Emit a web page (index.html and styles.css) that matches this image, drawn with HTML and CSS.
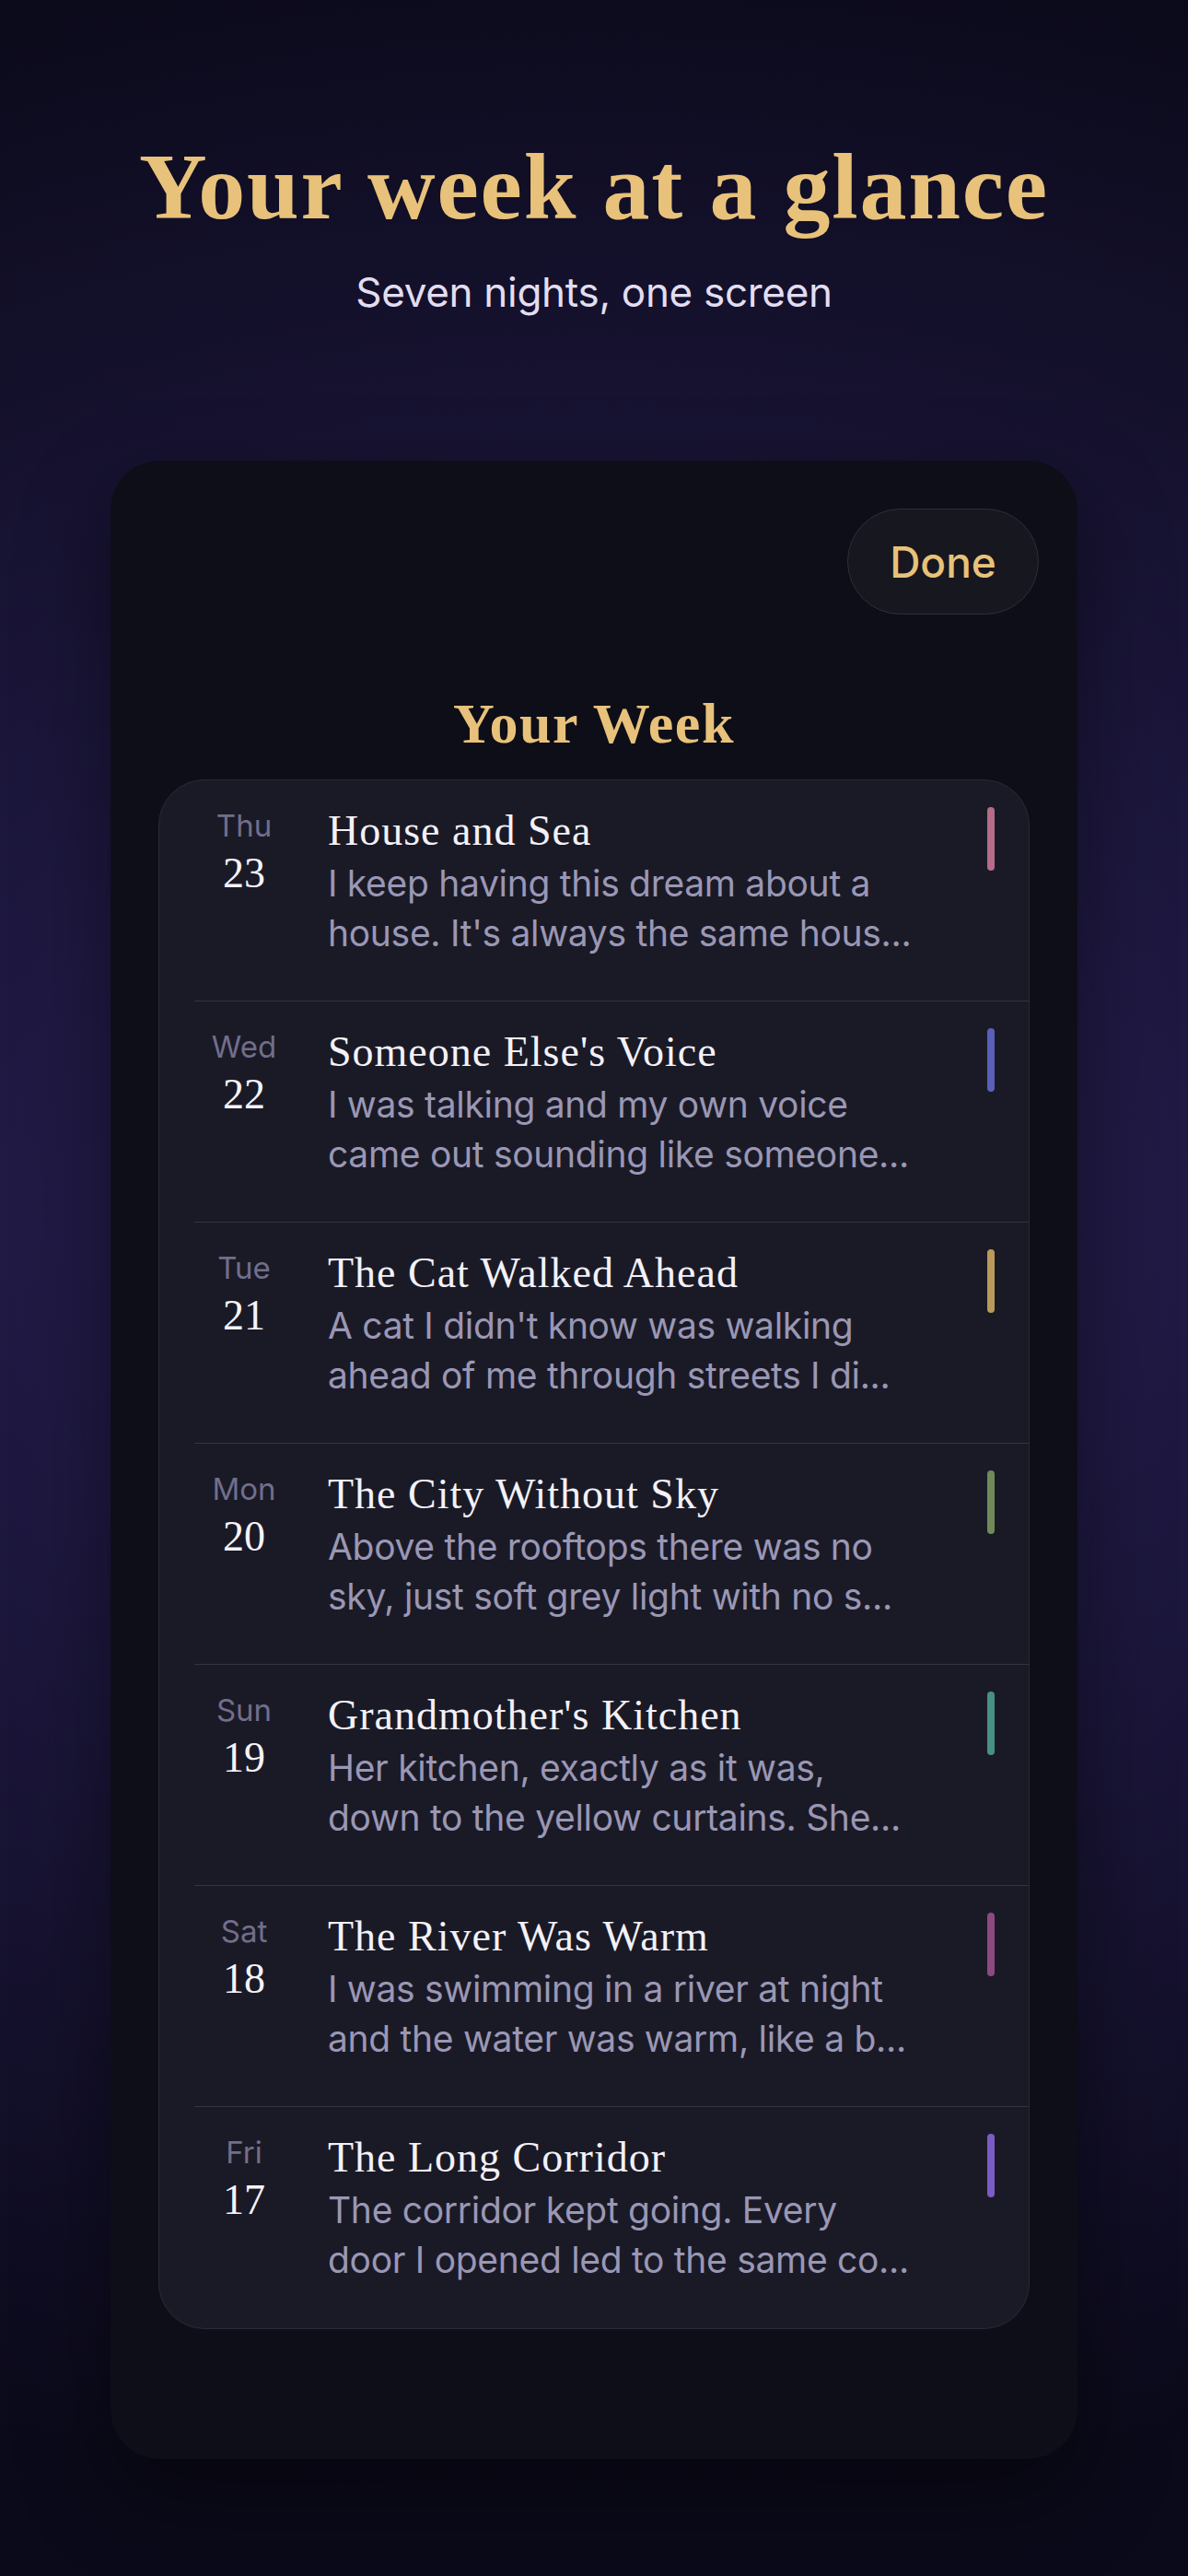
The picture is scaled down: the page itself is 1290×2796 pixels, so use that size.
FILE: index.html
```html
<!DOCTYPE html>
<html lang="en">
<head>
<meta charset="utf-8">
<title>Your week at a glance</title>
<link rel="stylesheet" href="styles.css">
</head>
<body>
<header class="hero">
  <h1 class="hero-title">Your week at a glance</h1>
  <p class="hero-sub">Seven nights, one screen</p>
</header>

<section class="sheet">
  <div class="sheet-top">
    <button class="done-btn">Done</button>
  </div>
  <h2 class="sheet-title">Your Week</h2>

  <ul class="week-list">
    <li class="entry">
      <div class="day"><span class="dow">Thu</span><span class="dnum">23</span></div>
      <div class="body">
        <div class="etitle">House and Sea</div>
        <p class="preview"><span class="line">I keep having this dream about a</span><span class="line">house. It's always the same hous...</span></p>
      </div>
      <span class="tag tag-rose"></span>
    </li>
    <li class="entry">
      <div class="day"><span class="dow">Wed</span><span class="dnum">22</span></div>
      <div class="body">
        <div class="etitle">Someone Else's Voice</div>
        <p class="preview"><span class="line">I was talking and my own voice</span><span class="line">came out sounding like someone...</span></p>
      </div>
      <span class="tag tag-indigo"></span>
    </li>
    <li class="entry">
      <div class="day"><span class="dow">Tue</span><span class="dnum">21</span></div>
      <div class="body">
        <div class="etitle">The Cat Walked Ahead</div>
        <p class="preview"><span class="line">A cat I didn't know was walking</span><span class="line">ahead of me through streets I di...</span></p>
      </div>
      <span class="tag tag-gold"></span>
    </li>
    <li class="entry">
      <div class="day"><span class="dow">Mon</span><span class="dnum">20</span></div>
      <div class="body">
        <div class="etitle">The City Without Sky</div>
        <p class="preview"><span class="line">Above the rooftops there was no</span><span class="line">sky, just soft grey light with no s...</span></p>
      </div>
      <span class="tag tag-olive"></span>
    </li>
    <li class="entry">
      <div class="day"><span class="dow">Sun</span><span class="dnum">19</span></div>
      <div class="body">
        <div class="etitle">Grandmother's Kitchen</div>
        <p class="preview"><span class="line">Her kitchen, exactly as it was,</span><span class="line">down to the yellow curtains. She...</span></p>
      </div>
      <span class="tag tag-teal"></span>
    </li>
    <li class="entry">
      <div class="day"><span class="dow">Sat</span><span class="dnum">18</span></div>
      <div class="body">
        <div class="etitle">The River Was Warm</div>
        <p class="preview"><span class="line">I was swimming in a river at night</span><span class="line">and the water was warm, like a b...</span></p>
      </div>
      <span class="tag tag-plum"></span>
    </li>
    <li class="entry">
      <div class="day"><span class="dow">Fri</span><span class="dnum">17</span></div>
      <div class="body">
        <div class="etitle">The Long Corridor</div>
        <p class="preview"><span class="line">The corridor kept going. Every</span><span class="line">door I opened led to the same co...</span></p>
      </div>
      <span class="tag tag-violet"></span>
    </li>
  </ul>
</section>
</body>
</html>
```

FILE: styles.css
```css
* { box-sizing: border-box; }

html, body {
  margin: 0;
  padding: 0;
}

body {
  width: 1290px;
  min-height: 2796px;
  background-color: #0b0a1a;
  background-image: radial-gradient(ellipse 150% 50% at 50% 47%, #2a2158 0%, #0b0a1a 100%);
  font-family: "Inter", "Noto Sans", sans-serif;
  padding-top: 148px;
}

.hero {
  text-align: center;
}

.hero-title {
  margin: 0;
  font-family: "Liberation Serif", "DejaVu Serif", serif;
  font-weight: 700;
  font-size: 102px;
  line-height: 110px;
  letter-spacing: 1.8px;
  color: #e8c27a;
}

.hero-sub {
  margin: 32px 0 0;
  font-size: 44px;
  line-height: 54px;
  color: #e2def0;
  letter-spacing: -0.3px;
}

.sheet {
  width: 1050px;
  margin: 156px auto 0;
  padding: 52px 42px 141px;
  background: #0e0e18;
  border-radius: 54px;
  box-shadow: 0 40px 100px rgba(0, 0, 0, 0.45);
}

.sheet-top {
  display: flex;
  justify-content: flex-end;
}

.done-btn {
  width: 208px;
  height: 115px;
  border-radius: 58px;
  border: 1.5px solid #2e2e3e;
  background: #17171f;
  color: #e8c27a;
  font-family: "Inter", "Noto Sans", sans-serif;
  font-weight: 500;
  font-size: 46px;
  padding: 0;
}

.sheet-title {
  margin: 83px 0 0;
  text-align: center;
  font-family: "Liberation Serif", "DejaVu Serif", serif;
  font-weight: 700;
  font-size: 62px;
  line-height: 70px;
  letter-spacing: 1.5px;
  color: #e8c27a;
}

.week-list {
  list-style: none;
  margin: 26px 10px 0;
  padding: 0;
  background: #1a1a26;
  border: 1.5px solid #2a2a38;
  border-radius: 50px;
  overflow: hidden;
}

.entry {
  display: flex;
  align-items: flex-start;
  height: 240px;
  margin-left: 38px;
  padding-top: 27px;
  border-bottom: 1.5px solid #34343f;
}

.entry:last-child {
  border-bottom: none;
}

.day {
  flex: 0 0 108px;
  display: flex;
  flex-direction: column;
  align-items: center;
  padding-top: 2px;
}

.dow {
  font-size: 33px;
  line-height: 40px;
  color: #716e8c;
}

.dnum {
  margin-top: 6px;
  font-family: "Liberation Serif", "DejaVu Serif", serif;
  font-size: 46px;
  line-height: 52px;
  color: #f5f3fa;
}

.body {
  flex: 0 0 660px;
  margin-left: 37px;
}

.etitle {
  font-family: "Liberation Serif", "DejaVu Serif", serif;
  font-size: 46px;
  line-height: 56px;
  letter-spacing: 1px;
  color: #f3f1f8;
  margin-bottom: 2px;
}

.preview {
  margin: 0;
  font-size: 39px;
  line-height: 54px;
  letter-spacing: -0.3px;
  color: #9a97b5;
}

.line {
  display: block;
  white-space: nowrap;
}

.tag {
  flex: 0 0 8px;
  width: 8px;
  height: 69px;
  margin-left: auto;
  margin-right: 37px;
  margin-top: 2px;
  border-radius: 4px;
}

.tag-rose { background: #b56c88; }
.tag-indigo { background: #5a5fb8; }
.tag-gold { background: #b89a5a; }
.tag-olive { background: #6f8a58; }
.tag-teal { background: #479086; }
.tag-plum { background: #8c4a80; }
.tag-violet { background: #7a5cc4; }
```
